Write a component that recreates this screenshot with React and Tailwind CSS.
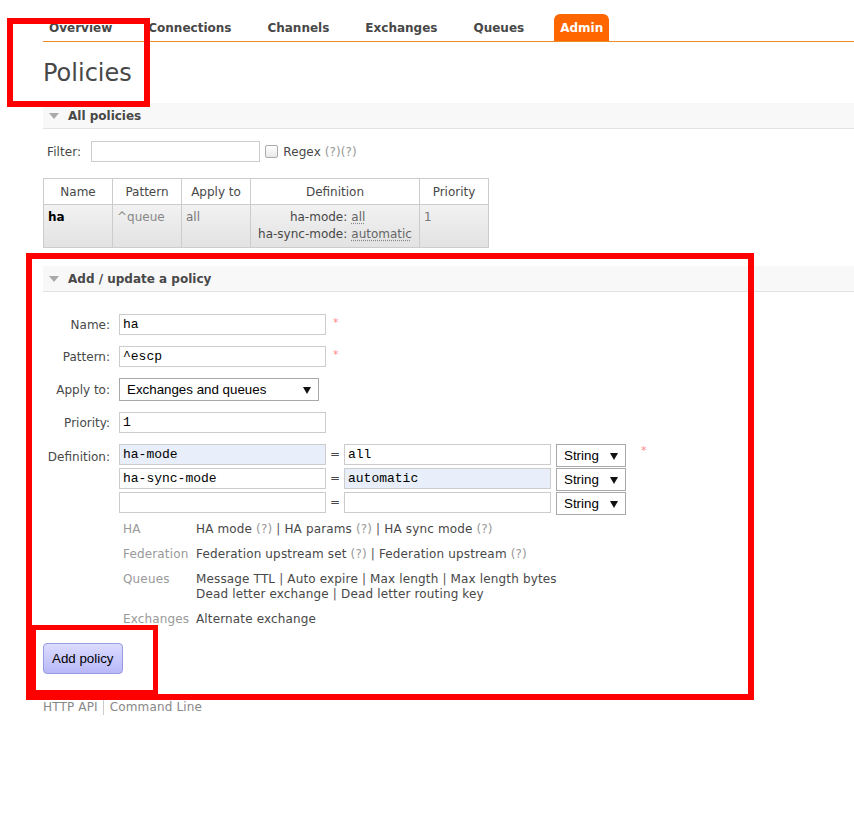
import React from 'react';

const Arrow = () => (
  <svg width="8" height="8" viewBox="0 0 8 8" className="shrink-0">
    <polygon points="0,1 8,1 4,8" fill="#111" />
  </svg>
);

const Fold = () => (
  <svg width="10" height="6" viewBox="0 0 10 6" className="mr-[9px]">
    <polygon points="0,0 10,0 5,6" fill="#aaa" />
  </svg>
);

const Star = ({ className = '' }) => (
  <span className={`text-[#f88] text-[11px] leading-none self-start ${className}`}>*</span>
);

const FakeSelect = ({ value, width }) => (
  <div
    className={`${width} h-[23px] border border-[#a9a9a9] bg-white flex items-center justify-between pl-[7px] pr-[7px] font-['Liberation_Sans',Arial,sans-serif] text-[13.33px] text-black`}
  >
    <span>{value}</span>
    <Arrow />
  </div>
);

const TextBox = ({ value = '', width = 'w-[207px]', tint = false }) => (
  <div
    className={`${width} h-[21px] border border-[#ccc] ${tint ? 'bg-[#e8eefa]' : 'bg-white'} flex items-center px-[3px] font-['Liberation_Mono','Courier_New',monospace] text-[13px] text-black`}
  >
    {value}
  </div>
);

const SectionHead = ({ title }) => (
  <div className="h-[26px] bg-[#f8f8f8] border-b border-[#e2e2e2] flex items-center pl-[6px] font-bold text-[#484848]">
    <Fold />
    {title}
  </div>
);

const Q = () => <span className="text-[#999]">(?)</span>;
const Sep = () => <span className="text-[#555]"> | </span>;

export default function App() {
  const tabs = ['Overview', 'Connections', 'Channels', 'Exchanges', 'Queues', 'Admin'];
  const defs = [
    ['ha-mode', 'all', true, false],
    ['ha-sync-mode', 'automatic', false, true],
    ['', '', false, false],
  ];

  return (
    <div className="relative min-h-[825px] bg-white font-['Verdana','DejaVu_Sans',sans-serif] text-[12px] text-[#484848]">
      <div className="pl-[43px] pt-[14px]">
        {/* menu */}
        <ul className="flex gap-[24px] border-b border-[#ec8c27]">
          {tabs.map((t) => (
            <li
              key={t}
              className={`h-[27px] px-[6px] flex items-center font-bold rounded-t-[6px] ${
                t === 'Admin' ? 'bg-[#ff6600] text-white' : 'text-[#484848]'
              }`}
            >
              {t}
            </li>
          ))}
        </ul>

        <h1 className="mt-[16px] text-[24px] leading-[30px] text-[#484848]">Policies</h1>

        {/* all policies */}
        <div className="mt-[15px]">
          <SectionHead title="All policies" />
          <div className="mt-[12px] pl-[4px] flex items-center tracking-[0.1px]">
            <span>Filter:</span>
            <div className="ml-[10px] w-[169px] h-[21px] border border-[#ccc]" />
            <span className="ml-[5px] w-[13px] h-[13px] border border-[#aaa] rounded-[2px] bg-gradient-to-b from-white to-[#e8e8e8]" />
            <span className="ml-[5px]">
              Regex <span className="text-[#999]">(?)(?)</span>
            </span>
          </div>

          <table className="mt-[16px] border-collapse">
            <thead>
              <tr className="h-[26px]">
                {[
                  ['Name', 'w-[69px]'],
                  ['Pattern', 'w-[69px]'],
                  ['Apply to', 'w-[69px]'],
                  ['Definition', 'w-[169px]'],
                  ['Priority', 'w-[69px]'],
                ].map(([h, w]) => (
                  <th key={h} className={`${w} border border-[#ccc] font-normal text-center px-[4px]`}>
                    {h}
                  </th>
                ))}
              </tr>
            </thead>
            <tbody>
              <tr className="bg-gradient-to-b from-[#f2f2f2] to-[#e2e2e2] align-top">
                <td className="border border-[#ccc] px-[4px] pt-[3px] font-bold text-black">ha</td>
                <td className="border border-[#ccc] px-[4px] pt-[3px] text-[#888]">^queue</td>
                <td className="border border-[#ccc] px-[4px] pt-[3px] text-[#777]">all</td>
                <td className="border border-[#ccc] px-[4px] pt-[4px] pb-[4px]">
                  <div className="grid grid-cols-[auto_auto] justify-center gap-x-[4px] leading-[17px]">
                    <span className="text-right">ha-mode:</span>
                    <span className="underline decoration-dotted decoration-[#888] underline-offset-2 text-[#666]">all</span>
                    <span className="text-right">ha-sync-mode:</span>
                    <span className="underline decoration-dotted decoration-[#888] underline-offset-2 text-[#666]">automatic</span>
                  </div>
                </td>
                <td className="border border-[#ccc] px-[4px] pt-[3px] text-[#777]">1</td>
              </tr>
            </tbody>
          </table>
        </div>

        {/* add / update */}
        <div className="mt-[18px]">
          <SectionHead title="Add / update a policy" />

          <div className="mt-[22px] flex flex-col">
            <div className="flex items-center mb-[11px]">
              <label className="w-[67px] text-right mr-[9px]">Name:</label>
              <TextBox value="ha" />
              <Star className="ml-[7px] mt-[3px]" />
            </div>
            <div className="flex items-center mb-[11px]">
              <label className="w-[67px] text-right mr-[9px]">Pattern:</label>
              <TextBox value="^escp" />
              <Star className="ml-[7px] mt-[3px]" />
            </div>
            <div className="flex items-center mb-[11px]">
              <label className="w-[67px] text-right mr-[9px]">Apply to:</label>
              <FakeSelect value="Exchanges and queues" width="w-[200px]" />
            </div>
            <div className="flex items-center mb-[11px]">
              <label className="w-[67px] text-right mr-[9px]">Priority:</label>
              <TextBox value="1" />
            </div>
            <div className="flex items-start">
              <label className="w-[67px] text-right mr-[9px] mt-[4px]">Definition:</label>
              <div className="flex flex-col">
                {defs.map(([k, v, tk, tv], i) => (
                  <div key={i} className="flex items-start h-[24px]">
                    <TextBox value={k} tint={tk} />
                    <span className="w-[18px] text-center leading-[21px]">=</span>
                    <TextBox value={v} tint={tv} />
                    <div className="ml-[5px]">
                      <FakeSelect value="String" width="w-[70px]" />
                    </div>
                    {i === 0 && <Star className="ml-[15px] mt-[1px]" />}
                  </div>
                ))}

                {/* helpers */}
                <div className="mt-[1px] grid grid-cols-[73px_auto] leading-[15px] pl-[4px] tracking-[0.15px]">
                  <span className="text-[#999] py-[5px]">HA</span>
                  <span className="py-[5px]">
                    HA mode <Q /><Sep />HA params <Q /><Sep />HA sync mode <Q />
                  </span>
                  <span className="text-[#999] py-[5px]">Federation</span>
                  <span className="py-[5px]">
                    Federation upstream set <Q /><Sep />Federation upstream <Q />
                  </span>
                  <span className="text-[#999] py-[5px]">Queues</span>
                  <span className="py-[5px]">
                    Message TTL<Sep />Auto expire<Sep />Max length<Sep />Max length bytes
                    <br />
                    Dead letter exchange<Sep />Dead letter routing key
                  </span>
                  <span className="text-[#999] py-[5px]">Exchanges</span>
                  <span className="py-[5px]">Alternate exchange</span>
                </div>
              </div>
            </div>

            <div className="mt-[11px]">
              <button className="h-[31px] px-[8px] border border-[#9a9ae0] rounded-[4px] bg-gradient-to-b from-[#dcdcff] to-[#b8b8f8] font-['Liberation_Sans',Arial,sans-serif] text-[13.33px] text-black">
                Add policy
              </button>
            </div>
          </div>
        </div>

        {/* footer */}
        <div className="mt-[25px] flex items-center text-[#888] leading-[16px] tracking-[0.15px]">
          <span className="pr-[5px]">HTTP API</span>
          <span className="pl-[6px] border-l border-[#ccc]">Command Line</span>
        </div>
      </div>

      {/* annotation boxes */}
      <div className="absolute left-[7px] top-[18px] w-[143px] h-[89px] border-[6px] border-[#ff0000]" />
      <div className="absolute left-[26px] top-[253px] w-[728px] h-[447px] border-[6px] border-[#ff0000]" />
      <div className="absolute left-[31px] top-[625px] w-[127px] h-[70px] border-[5px] border-[#ff0000]" />
    </div>
  );
}
